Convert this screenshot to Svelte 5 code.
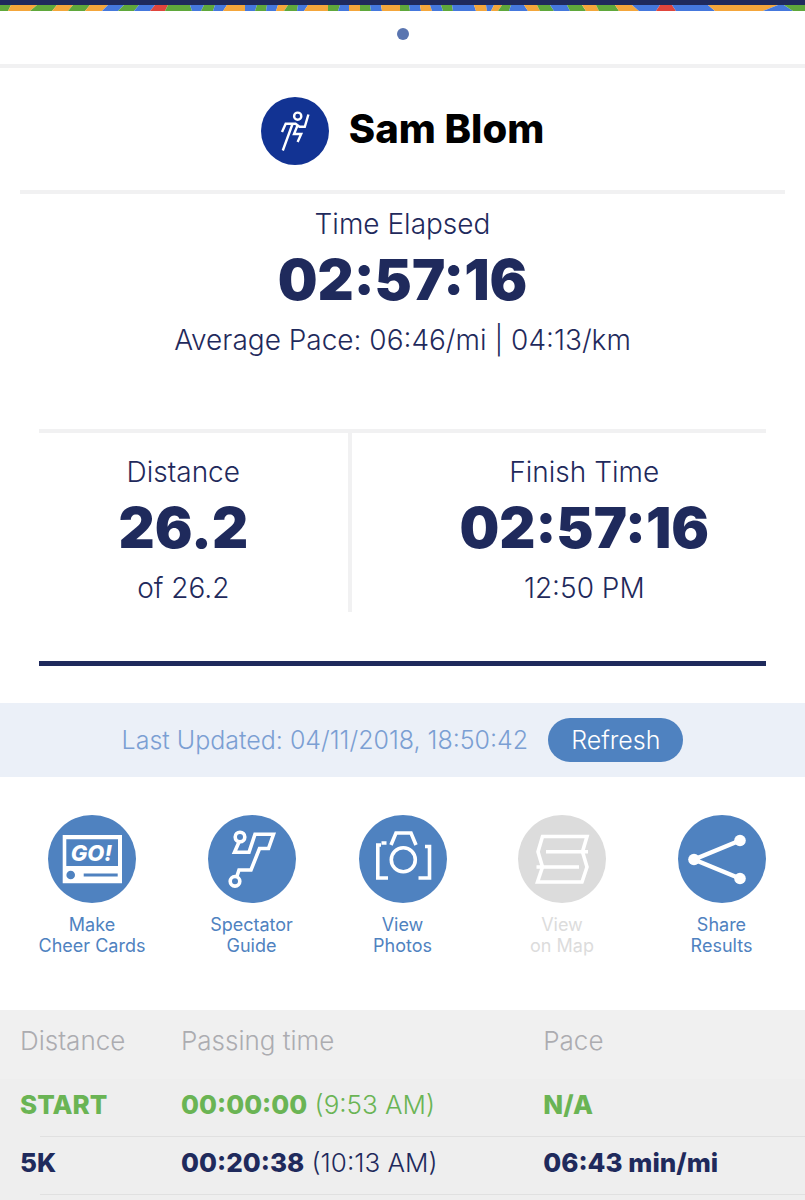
<script>
  const runner = {
    name: 'Sam Blom',
    elapsed: '02:57:16',
    pace: '06:46/mi | 04:13/km',
    distance: '26.2',
    total: '26.2',
    finish: '02:57:16',
    clock: '12:50 PM'
  };

  let updated = $state('04/11/2018, 18:50:42');

  const splits = [
    { point: 'START', time: '00:00:00', clock: '9:53 AM', pace: 'N/A', start: true },
    { point: '5K', time: '00:20:38', clock: '10:13 AM', pace: '06:43 min/mi' }
  ];

  const actions = [
    { icon: 'cards', lines: ['Make', 'Cheer Cards'] },
    { icon: 'guide', lines: ['Spectator', 'Guide'] },
    { icon: 'photos', lines: ['View', 'Photos'] },
    { icon: 'map', lines: ['View', 'on Map'], disabled: true },
    { icon: 'share', lines: ['Share', 'Results'] }
  ];

  const G = '#5fa83b';
  const O = '#f4a63b';
  const B = '#4578dd';
  const R = '#e0453c';

  // colour, top edge x, bottom edge x
  const stripes = [
    [G, 0, 0], [O, 11, 8], [G, 37, 30], [O, 57, 52], [G, 73, 68], [O, 90, 85],
    [B, 108, 102], [G, 124, 118], [B, 139, 134], [R, 155, 150], [G, 168, 165],
    [B, 190, 192], [G, 204, 201], [B, 215, 213], [O, 227, 223], [G, 245, 245],
    [B, 245, 245], [G, 257, 255], [B, 267, 266], [O, 278, 276], [G, 288, 284],
    [B, 298, 297], [O, 308, 304], [G, 328, 328], [B, 340, 338], [O, 349, 349],
    [G, 360, 360], [B, 370, 371], [O, 381, 382], [G, 400, 400], [B, 409, 410],
    [O, 420, 421], [B, 430, 432], [G, 441, 443], [B, 452, 453], [O, 474, 476],
    [B, 486, 487], [O, 494, 491], [G, 502, 498], [B, 511, 509], [O, 524, 528],
    [G, 537, 540], [B, 550, 554], [G, 567, 570], [O, 582, 586], [G, 596, 599],
    [O, 615, 619], [B, 632, 639], [R, 660, 656], [B, 672, 676], [O, 708, 715],
    [B, 778, 763], [G, 784, 793], [G, 805, 805]
  ];

  function refresh() {
    updated = new Date().toLocaleString('en-GB');
  }
</script>

<main>
  <svg class="pattern" viewBox="0 0 805 6" preserveAspectRatio="none" aria-hidden="true">
    {#each stripes.slice(0, -1) as [fill, top, bottom], i}
      <polygon {fill} points="{top},0 {stripes[i + 1][1]},0 {stripes[i + 1][2]},6 {bottom},6" />
    {/each}
  </svg>

  <nav class="pager">
    <button class="dot" aria-label="Runner 1"></button>
  </nav>

  <header class="runner">
    <svg class="avatar" viewBox="0 0 68 68" aria-hidden="true">
      <circle cx="34" cy="34" r="34" fill="#123393" />
      <g fill="none" stroke="#fff" stroke-width="2.4">
        <circle cx="36.7" cy="19.2" r="3.6" />
        <path d="M21 35L24.7 26.7H34.5L38.5 29.8H43.8L47.4 17.5" />
        <path d="M31.5 27L21.8 53.5M36.5 28.5L33 37H40.2L36.6 45" />
      </g>
    </svg>
    <h1>{runner.name}</h1>
  </header>

  <section class="stat elapsed">
    <p>Time Elapsed</p>
    <strong>{runner.elapsed}</strong>
    <p>Average Pace: {runner.pace}</p>
  </section>

  <section class="totals">
    <div class="stat covered">
      <p>Distance</p>
      <strong>{runner.distance}</strong>
      <p>of {runner.total}</p>
    </div>
    <div class="stat finish">
      <p>Finish Time</p>
      <strong>{runner.finish}</strong>
      <p>{runner.clock}</p>
    </div>
  </section>

  <div class="updated">
    <span>Last Updated: {updated}</span>
    <button class="refresh" onclick={refresh}>Refresh</button>
  </div>

  <div class="actions">
    {#each actions as action}
      <button class="action" disabled={action.disabled}>
        <svg viewBox="0 0 88 88" aria-hidden="true">
          <circle cx="44" cy="44" r="44" fill="currentColor" />
          <g fill="none" stroke="#fff" stroke-width="3.6">
            {#if action.icon === 'cards'}
              <path d="M14.7 20H74V68.3H14.7Z" fill="#fff" stroke="none" />
              <path d="M18.3 24.3H70V51H18.3Z" fill="currentColor" stroke="none" />
              <circle cx="22.7" cy="60" r="4.3" fill="currentColor" stroke="none" />
              <path d="M35.7 60H69.7" stroke="currentColor" stroke-width="3" />
              <text class="go" x="43.5" y="46" text-anchor="middle">GO!</text>
            {:else if action.icon === 'guide'}
              <circle cx="32" cy="22" r="4.8" />
              <circle cx="27" cy="66.3" r="4.8" />
              <path d="M31 27L26.5 37.3H41L47 19.3H65.5L60.5 33.5H51.5L43 55H31L29 61" />
            {:else if action.icon === 'photos'}
              <path d="M22 30H18.8V63H29M22.5 28H27.5M32 30L37 18H52L57 30M66 31.5H70.5V63H59.5" />
              <circle cx="44.3" cy="44.7" r="12" />
            {:else if action.icon === 'map'}
              <path d="M69 21.5H24.5L20 36.7L24.5 52L19.5 67H64L69 52L64.5 36.7Z" />
              <path d="M28 36.7H70M18.5 52H61" />
            {:else}
              <path d="M62 25.5L16 44.5L62 63.5" stroke-width="4.4" />
              <g fill="#fff" stroke="none">
                <circle cx="16" cy="44.5" r="5.8" />
                <circle cx="62" cy="25.5" r="5.8" />
                <circle cx="62" cy="63.5" r="5.8" />
              </g>
            {/if}
          </g>
        </svg>
        <span>{action.lines[0]}<br />{action.lines[1]}</span>
      </button>
    {/each}
  </div>

  <div class="splits">
    <table>
      <thead>
        <tr>
          <th class="point">Distance</th>
          <th class="passing">Passing time</th>
          <th>Pace</th>
        </tr>
      </thead>
      <tbody>
        {#each splits as split}
          <tr class:start={split.start}>
            <td><b>{split.point}</b></td>
            <td><b>{split.time}</b> ({split.clock})</td>
            <td><b>{split.pace}</b></td>
          </tr>
        {/each}
      </tbody>
    </table>
  </div>
</main>

<style>
  :global(body) {
    margin: 0;
    background: #fff;
  }

  main {
    display: flex;
    flex-direction: column;
    min-height: 100vh;
    box-sizing: border-box;
    border-top: 5px solid #1f2a5c;
    color: #1f2a5c;
    font-family: Inter, 'Liberation Sans', sans-serif;
    font-weight: 300;
  }

  button {
    border: 0;
    padding: 0;
    background: none;
    font: inherit;
    cursor: pointer;
  }

  p,
  h1 {
    margin: 0;
  }

  .pattern {
    display: block;
    width: 100%;
    height: 6px;
  }

  .pager {
    display: flex;
    justify-content: center;
    padding: 17px 0 24px;
    border-bottom: 4px solid #f1f1f2;
  }

  .dot {
    width: 12px;
    height: 12px;
    border-radius: 50%;
    background: #5a75b0;
  }

  .runner {
    display: flex;
    align-items: center;
    justify-content: center;
    gap: 20px;
    margin: 0 20px;
    padding: 29px 0 25px;
    border-bottom: 4px solid #f1f1f2;
  }

  .avatar {
    width: 68px;
    height: 68px;
  }

  h1 {
    padding-bottom: 4px;
    color: #000;
    font-size: 40px;
    font-weight: 800;
    line-height: 48px;
  }

  .stat {
    text-align: center;
    font-size: 28px;
    line-height: 36px;
  }

  .stat strong {
    display: block;
    margin-bottom: 4px;
    font-size: 56px;
    font-weight: 900;
    line-height: 76px;
  }

  .elapsed {
    padding: 12px 20px 71px;
  }

  .totals {
    display: grid;
    grid-template-columns: 43% 50%;
    justify-content: space-between;
    margin: 0 39px;
    padding-bottom: 49px;
    border-top: 4px solid #f1f1f2;
    border-bottom: 5px solid #1f2a5c;
  }

  .covered,
  .finish {
    padding-top: 21px;
    padding-bottom: 6px;
  }

  .covered {
    padding-right: 20px;
    border-right: 4px solid #f1f1f2;
  }

  .updated {
    display: flex;
    align-items: center;
    justify-content: center;
    gap: 20px;
    margin-top: 37px;
    padding: 15px 20px;
    background: #ebf0f8;
    color: #7b9fd3;
    font-size: 25px;
  }

  .refresh {
    padding: 0 23px;
    border-radius: 22px;
    background: #4f82c0;
    color: #fff;
    line-height: 44px;
  }

  .actions {
    display: grid;
    grid-template-columns: 160fr 159fr 143fr 176fr 143fr;
    padding: 38px 12px 54px;
  }

  .action {
    display: flex;
    flex-direction: column;
    align-items: center;
    gap: 11px;
    color: #4f82c0;
    font-size: 18px;
    font-weight: 400;
    line-height: 21px;
  }

  .action:disabled {
    color: #dcdcdc;
    cursor: default;
  }

  .action svg {
    width: 88px;
    height: 88px;
  }

  .go {
    fill: #fff;
    stroke: none;
    font-size: 22px;
    font-style: italic;
    font-weight: 800;
  }

  .splits {
    flex: 1;
    background: #eee;
  }

  table {
    width: 100%;
    border-collapse: collapse;
    table-layout: fixed;
    font-size: 26px;
    line-height: 30px;
    text-align: left;
  }

  thead {
    background: #f0f0f0;
    color: #acacb0;
  }

  th {
    padding: 16px 0 23px;
    font-weight: 300;
  }

  td {
    padding: 11px 0 17px;
  }

  th:first-child,
  td:first-child {
    padding-left: 20px;
  }

  .point {
    width: 20%;
  }

  .passing {
    width: 45%;
  }

  /* row rule starts inset from the left edge */
  tbody tr {
    background: linear-gradient(#e0e0e0, #e0e0e0) 40px 100% / 100% 1px no-repeat;
  }

  b {
    font-weight: 800;
  }

  .start {
    color: #6ab454;
  }
</style>
